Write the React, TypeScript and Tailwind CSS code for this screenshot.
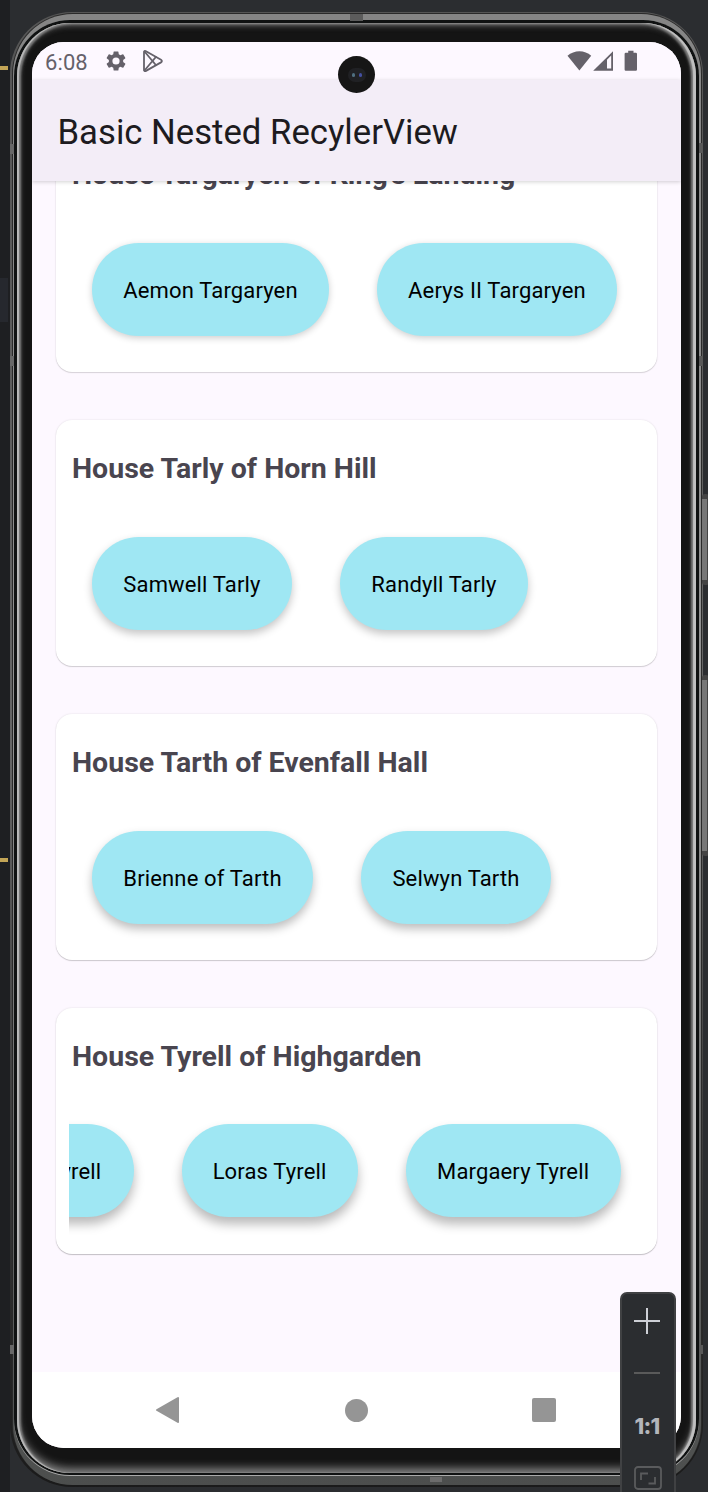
import React from "react";

type Member = { name: string; width: string };
type House = { title: string; members: Member[]; list: string; card: string; chip: string };

const houses: House[] = [
  {
    title: "House Targaryen of King's Landing",
    members: [
      { name: "Aemon Targaryen", width: "w-[237px]" },
      { name: "Aerys II Targaryen", width: "w-[240px]" },
    ],
    list: "pl-[23px]",
    card: "shadow-[0_1px_1px_rgba(0,0,0,0.12),0_0_2px_rgba(0,0,0,0.14)]",
    chip: "shadow-[0_2px_7px_rgba(0,0,0,0.2)]",
  },
  {
    title: "House Tarly of Horn Hill",
    members: [
      { name: "Samwell Tarly", width: "w-[200px]" },
      { name: "Randyll Tarly", width: "w-[188px]" },
    ],
    list: "pl-[23px]",
    card: "shadow-[0_1px_1px_rgba(0,0,0,0.15),0_0_2px_rgba(0,0,0,0.12)]",
    chip: "shadow-[0_4px_9px_rgba(0,0,0,0.23)]",
  },
  {
    title: "House Tarth of Evenfall Hall",
    members: [
      { name: "Brienne of Tarth", width: "w-[221px]" },
      { name: "Selwyn Tarth", width: "w-[190px]" },
    ],
    list: "pl-[23px]",
    card: "shadow-[0_1px_1px_rgba(0,0,0,0.17),0_0_2px_rgba(0,0,0,0.12)]",
    chip: "shadow-[0_5px_10px_rgba(0,0,0,0.26)]",
  },
  {
    title: "House Tyrell of Highgarden",
    members: [
      { name: "Mace Tyrell", width: "w-[178px]" },
      { name: "Loras Tyrell", width: "w-[176px]" },
      { name: "Margaery Tyrell", width: "w-[215px]" },
    ],
    list: "-ml-[113.4px] -mt-[0.6px]",
    card: "shadow-[0_1px_1px_rgba(0,0,0,0.2),0_0_2px_rgba(0,0,0,0.12)]",
    chip: "shadow-[0_7px_11px_rgba(0,0,0,0.28)]",
  },
];

function HouseCard({ house }: { house: House }) {
  return (
    <section className={`h-[246px] w-[601px] shrink-0 rounded-[16px] bg-white ${house.card}`}>
      <h2 className="h-[93px] pl-4 pt-[32px] text-[28.5px] leading-[34px] font-bold whitespace-nowrap text-[#49454f]">
        {house.title}
      </h2>
      <div className="ml-[13px] h-[140px] w-[575px] overflow-hidden pt-6">
        <div className={`flex gap-12 ${house.list}`}>
          {house.members.map((m) => (
            <div
              key={m.name}
              className={`flex h-[93px] shrink-0 items-center justify-center rounded-full bg-[#9fe7f3] text-[22px] tracking-[0.15px] whitespace-nowrap text-black ${m.width} ${house.chip}`}
            >
              <span className="pt-[2px]">{m.name}</span>
            </div>
          ))}
        </div>
      </div>
    </section>
  );
}

function StatusBar() {
  return (
    <div className="flex h-[38px] shrink-0 items-start bg-[#fdf8ff] pl-[13px] text-[#65616a]">
      <span className="w-[60px] pt-[8px] text-[22px] leading-[26px] tracking-[0.1px]">6:08</span>
      <svg className="mt-[7px] -ml-[0.6px] h-6 w-6" viewBox="0 0 24 24" fill="currentColor">
        <path d="M19.14 12.94c.04-.3.06-.61.06-.94 0-.32-.02-.64-.07-.94l2.03-1.58a.49.49 0 0 0 .12-.61l-1.92-3.32a.49.49 0 0 0-.59-.22l-2.39.96a7 7 0 0 0-1.62-.94L14.4 2.81a.48.48 0 0 0-.48-.41h-3.84a.47.47 0 0 0-.47.41l-.36 2.54c-.59.24-1.13.57-1.62.94l-2.39-.96a.48.48 0 0 0-.59.22L2.74 8.87a.47.47 0 0 0 .12.61l2.03 1.58a7.5 7.5 0 0 0 0 1.88l-2.03 1.58a.49.49 0 0 0-.12.61l1.92 3.32c.12.22.37.29.59.22l2.39-.96c.5.38 1.03.7 1.62.94l.36 2.54c.05.24.24.41.48.41h3.84c.24 0 .44-.17.47-.41l.36-2.54a7 7 0 0 0 1.62-.94l2.39.96c.22.08.47 0 .59-.22l1.92-3.32a.47.47 0 0 0-.12-.61zM12 15.6a3.6 3.6 0 1 1 0-7.2 3.6 3.6 0 0 1 0 7.2z" />
      </svg>
      <svg className="mt-[7px] ml-[12.6px] h-[24px] w-[24px]" viewBox="0 0 24 24" fill="none" stroke="currentColor" strokeWidth="1.8" strokeLinejoin="round" strokeLinecap="round">
        <path d="M3 3.200C3 2 4 1.600 5 2.200L20 10.800c1.200.7 1.200 1.900 0 2.600L5 21.900c-1 .6-2 .1-2-1.100z" />
        <path d="M3.500 2.500 14.800 16M3.500 21.500 14.800 8M14.800 8l-3.200 4 3.200 4" />
      </svg>
      <svg className="mt-[8px] ml-[402px] h-[21px] w-[71px]" viewBox="0 0 71 21" fill="currentColor">
        <path d="M0.500 5.700C7.200-.4 17.800-.4 24.200 5.700L12.400 20.500z" />
        <path d="M26.200 20.800 46 1.200v19.600zM40 18.600h4.200V5.500L40 9.700z" fillRule="evenodd" />
        <path d="M58.800 2.700h2.400V.8h5.300v1.900h2.300q1.200 0 1.200 1.200v15.700q0 1.200-1.200 1.200H58.800q-1.200 0-1.200-1.200V3.900q0-1.200 1.200-1.200z" />
      </svg>
    </div>
  );
}

function NavBar() {
  return (
    <div className="flex h-[76px] shrink-0 items-center bg-white">
      <svg className="ml-[123px] h-7 w-[25px]" viewBox="0 0 25 28" fill="#959595">
        <path d="M1.500 13.200 22.500 1.200q1.500-.7 1.500 1v23.600q0 1.700-1.500 1L1.500 14.800q-1.300-.8 0-1.600z" />
      </svg>
      <div className="ml-[165px] h-[23px] w-[23px] rounded-full bg-[#959595]" />
      <div className="ml-[163.500px] h-6 w-6 rounded-[2px] bg-[#959595]" />
    </div>
  );
}

function Screen() {
  return (
    <div className="flex h-[1406px] w-[649px] flex-col overflow-hidden rounded-[32px] bg-[#fdf8ff]">
      <StatusBar />
      <header className="z-10 flex h-[101px] shrink-0 items-center bg-[#f3edf7] pt-[3px] pl-[25.5px] text-[34.7px] whitespace-nowrap text-[#1d1b20] shadow-[0_1px_4px_rgba(0,0,0,0.18)]">
        Basic Nested RecylerView
      </header>
      <main className="min-h-0 flex-1 overflow-hidden pl-6">
        <div className="-mt-[55px] flex flex-col gap-12">
          {houses.map((h) => (
            <HouseCard key={h.title} house={h} />
          ))}
        </div>
      </main>
      <NavBar />
    </div>
  );
}

function Phone() {
  return (
    <div className="relative mt-3 h-[1475px] w-[693px] shrink-0 rounded-[62px] bg-linear-to-b from-[#555] via-[#666] to-[#1a1a1a] pt-px pr-px pb-[2px] pl-[2px]">
      <div className="h-full rounded-[61px] bg-[#2a2a2a] pt-px pr-px pl-px">
        <div className="h-full rounded-[60px] bg-linear-to-b from-[#858585] from-0% via-[#929292] via-50% to-[#4c4e4d] pt-[6px] pr-[2px] pb-[9px] pl-px">
          <div className="h-full rounded-[56px] bg-[#aaa] pb-px">
            <div className="h-full rounded-[56px] bg-[#101212] pt-[3px] pr-[3px] pb-[2px] pl-[3px]">
              <div className="h-full rounded-[53px] bg-[#141414] pt-[19px] pl-[15px] shadow-[inset_2px_0_1px_#bbb,inset_-3px_0_1px_#c0c0c0,inset_4px_1px_2px_#777,inset_-5px_1px_2px_#777,inset_0_-5px_8px_#808080,inset_0_2px_6px_#777]">
                <Screen />
              </div>
            </div>
          </div>
        </div>
      </div>
      <div className="absolute top-[2px] left-[340px] h-[7px] w-[13px] bg-[#5c5c5c]" />
      <div className="absolute top-[132px] left-0 h-[10px] w-[4px] bg-[#686868]" />
      <div className="absolute top-[344px] left-0 h-[10px] w-[4px] bg-[#686868]" />
      <div className="absolute top-[1333px] left-0 h-[9px] w-[4px] bg-[#686868]" />
      <div className="absolute top-[131px] right-0 h-[10px] w-[4px] bg-[#585858]" />
      <div className="absolute top-[344px] right-0 h-[10px] w-[4px] bg-[#585858]" />
      <div className="absolute top-[1333px] right-0 h-[9px] w-[4px] bg-[#585858]" />
      <div className="absolute top-[1465px] left-[420px] h-[5px] w-[12px] bg-[#6c6c6c]" />
      <div className="absolute top-[44px] left-[328px] z-20 flex h-[37px] w-[37px] items-center justify-center rounded-full bg-[#161616]">
        <div className="flex h-[14px] w-[18px] items-center justify-center gap-[4px] rounded-full bg-[#202124]">
          <div className="h-[4px] w-[3px] rounded-full bg-[#507080]" />
          <div className="h-[4px] w-[3px] rounded-full bg-[#4450a0]" />
        </div>
      </div>
    </div>
  );
}

function ZoomPanel() {
  return (
    <div className="absolute top-[1292px] left-[620px] z-30 flex h-[210px] w-[56px] flex-col items-center rounded-[7px] border-2 border-[#404143] bg-[#2b2d30]">
      <svg className="mt-[14px] mr-[2px] h-[26px] w-[26px]" viewBox="0 0 26 26" stroke="#ced0d6" strokeWidth="2">
        <path d="M0 13h26M13 0v26" />
      </svg>
      <div className="mt-[38px] mr-[2px] h-[2px] w-[26px] bg-[#5a5a5a]" />
      <div className="mt-[40px] mr-[2px] h-[24px] font-['Inter',sans-serif] text-[22px] leading-6 font-extrabold tracking-[-0.8px] text-[#b4b6bb]">1:1</div>
      <svg className="mt-[28px] h-6 w-7 shrink-0" viewBox="0 0 28 24" fill="none" stroke="#5a5b5d" strokeWidth="1.8">
        <rect x="1" y="1" width="26" height="22" rx="3" />
        <path d="M7 14V7.500h7M14.500 17.500H21V11" />
      </svg>
    </div>
  );
}

export default function App() {
  return (
    <div className="relative flex h-[1492px] w-[708px] overflow-hidden bg-[#2b2d30] font-['Roboto',sans-serif]">
      <aside className="flex w-[10px] shrink-0 flex-col bg-[#1e1f22] pt-[66px]">
        <div className="h-1 w-2 bg-[#c2a456]" />
        <div className="mt-[208px] h-11 w-2 bg-[#26282e]" />
        <div className="mt-[536px] h-1 w-2 bg-[#c2a456]" />
      </aside>
      <Phone />
      <div className="absolute top-[494px] left-[702px] h-[91px] w-[7px] rounded-[3px] border-y-[5px] border-r-2 border-[#444] bg-[#777]" />
      <div className="absolute top-[675px] left-[702px] h-[181px] w-[7px] rounded-[3px] border-y-[5px] border-r-2 border-[#444] bg-[#777]" />
      <ZoomPanel />
    </div>
  );
}
